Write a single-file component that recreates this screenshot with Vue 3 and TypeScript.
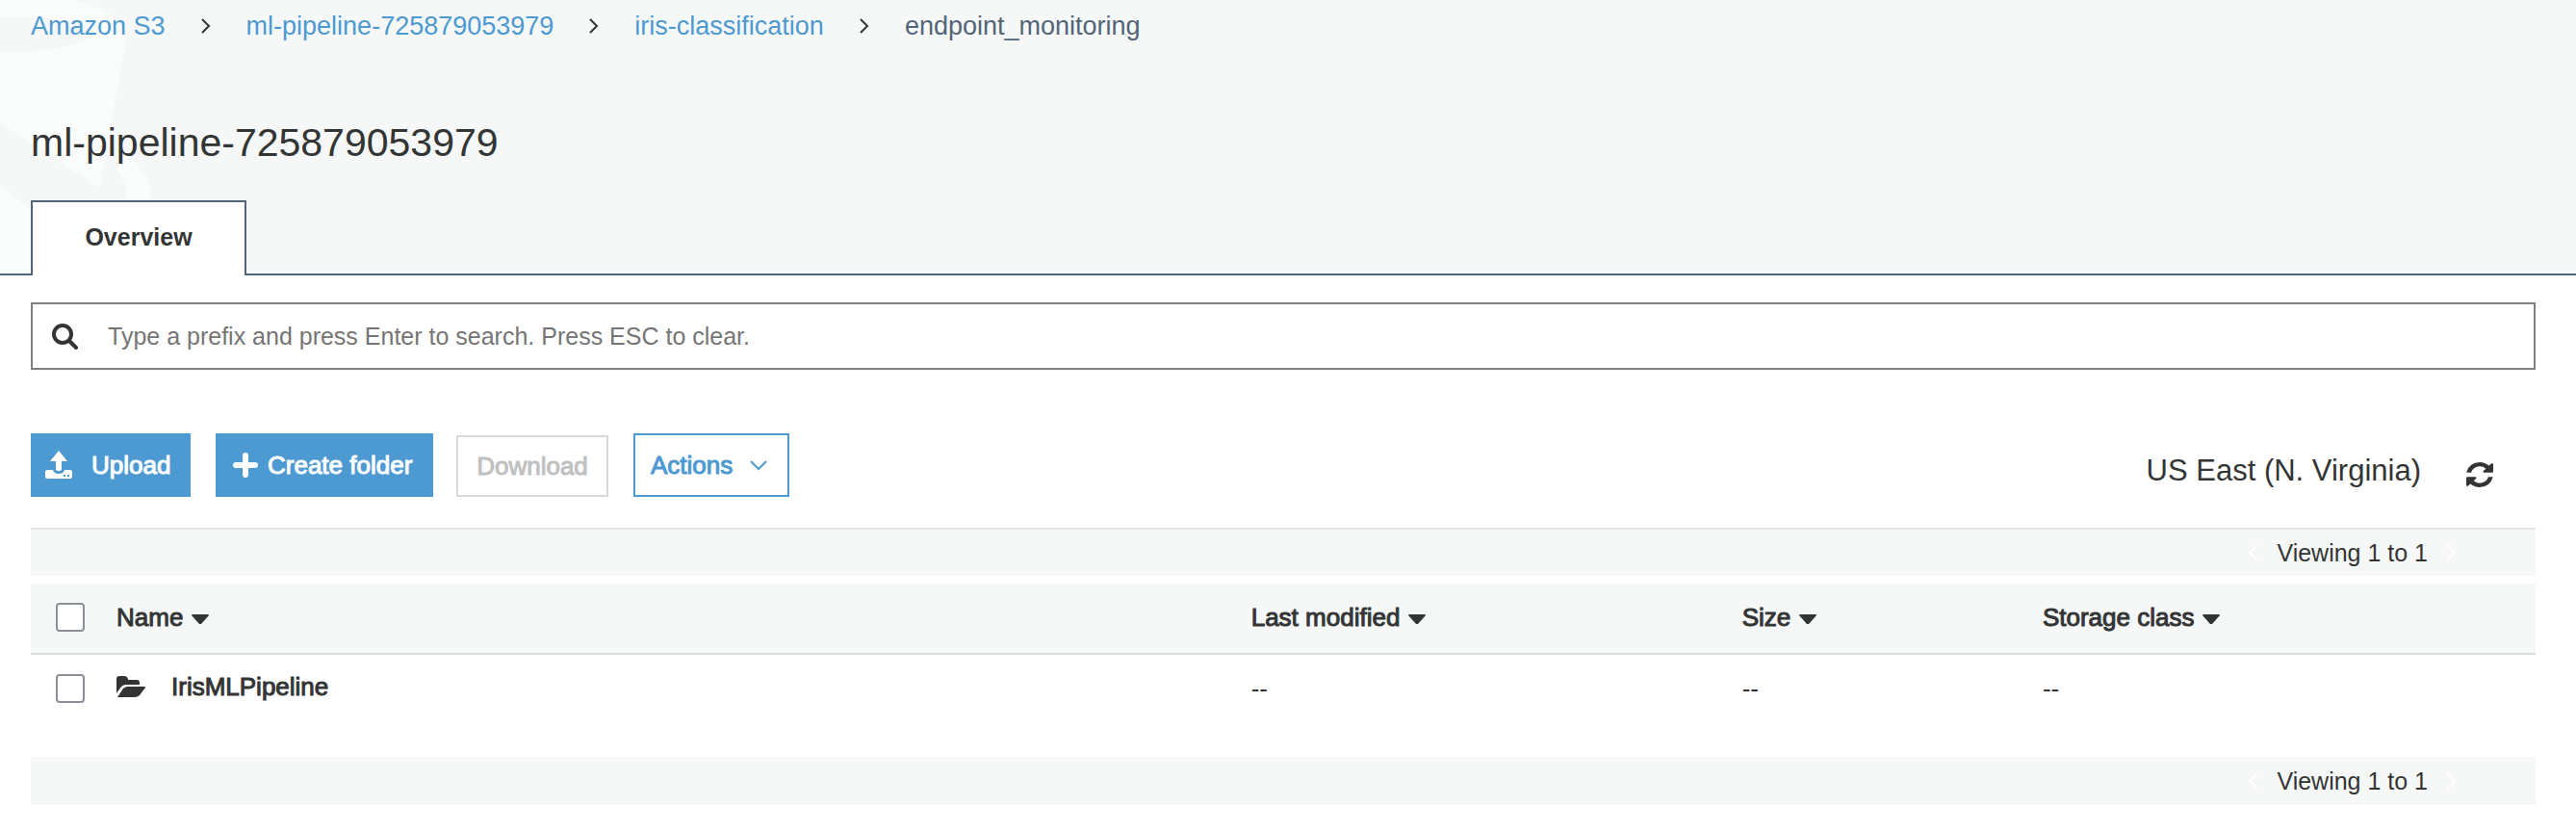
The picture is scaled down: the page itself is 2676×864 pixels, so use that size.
<script setup lang="ts">
import { ref } from 'vue'

interface Crumb {
  label: string
  href?: string
}

interface Column {
  key: 'modified' | 'size' | 'storage'
  label: string
}

interface Entry {
  name: string
  modified: string
  size: string
  storage: string
}

const crumbs: Crumb[] = [
  { label: 'Amazon S3', href: '#s3' },
  { label: 'ml-pipeline-725879053979', href: '#bucket' },
  { label: 'iris-classification', href: '#iris-classification' },
  { label: 'endpoint_monitoring' },
]

const columns: Column[] = [
  { key: 'modified', label: 'Last modified' },
  { key: 'size', label: 'Size' },
  { key: 'storage', label: 'Storage class' },
]

const entries: Entry[] = [
  { name: 'IrisMLPipeline', modified: '--', size: '--', storage: '--' },
]

const prefix = ref('')
const selected = ref<string[]>([])

function toggleAll(event: Event) {
  const checked = (event.target as HTMLInputElement).checked
  selected.value = checked ? entries.map((entry) => entry.name) : []
}
</script>

<template>
  <div class="page">
    <header class="masthead">
      <svg class="bucket" width="180" height="284" viewBox="0 0 180 284" aria-hidden="true">
        <path class="bucket-light" d="M0 0H75C108 8 132 20 130 45L104 195L0 128Z" />
        <path class="bucket-light" d="M0 192L40 224V284H0Z" />
        <path class="bucket-light" d="M128 158C148 170 158 190 157 215H124C135 205 134 192 122 178Z" />
        <path class="bucket-dark" d="M0 17C50 16 98 24 98 34C94 46 50 55 0 54Z" />
      </svg>

      <nav class="crumbs" aria-label="Breadcrumb">
        <template v-for="(crumb, index) in crumbs" :key="crumb.label">
          <svg v-if="index > 0" class="crumb-arrow" width="12" height="18" viewBox="0 0 12 18" aria-hidden="true">
            <path d="M2 2L9 9L2 16" />
          </svg>
          <a v-if="crumb.href" :href="crumb.href">{{ crumb.label }}</a>
          <span v-else aria-current="page">{{ crumb.label }}</span>
        </template>
      </nav>

      <h1>ml-pipeline-725879053979</h1>

      <div class="tabs" role="tablist">
        <button class="tab" type="button" role="tab" aria-selected="true">Overview</button>
      </div>
    </header>

    <main>
      <label class="search">
        <svg width="28" height="28" viewBox="0 0 28 28" aria-hidden="true">
          <circle cx="11" cy="12" r="9" fill="none" stroke="currentColor" stroke-width="4" />
          <path d="M18 19L25 26" fill="none" stroke="currentColor" stroke-width="4" stroke-linecap="round" />
        </svg>
        <input
          v-model="prefix"
          type="text"
          aria-label="Search by prefix"
          placeholder="Type a prefix and press Enter to search. Press ESC to clear."
          @keydown.esc="prefix = ''"
        />
      </label>

      <div class="toolbar">
        <button class="button primary upload" type="button">
          <svg width="28" height="30" viewBox="0 0 28 30" aria-hidden="true">
            <path d="M14 0L23 11H17V19Q17 21 14 21Q11 21 11 19V11H5Z" fill="currentColor" />
            <path d="M2 20H8Q9 24 14 24Q19 24 20 20H26Q28 20 28 22V27Q28 29 26 29H2Q0 29 0 27V22Q0 20 2 20ZM19 25V27H21V25ZM23 25V27H25V25Z" fill="currentColor" fill-rule="evenodd" />
          </svg>
          Upload
        </button>
        <button class="button primary create" type="button">
          <svg width="26" height="26" viewBox="0 0 26 26" aria-hidden="true">
            <path d="M13 3V23M3 13H23" fill="none" stroke="currentColor" stroke-width="6" stroke-linecap="round" />
          </svg>
          Create folder
        </button>
        <button class="button download" type="button" disabled>Download</button>
        <button class="button actions" type="button" aria-haspopup="menu">
          Actions
          <svg width="18" height="12" viewBox="0 0 18 12" aria-hidden="true">
            <path d="M1 2L9 10L17 2" fill="none" stroke="currentColor" stroke-width="2" />
          </svg>
        </button>
        <span class="region">US East (N. Virginia)</span>
        <button class="refresh" type="button" aria-label="Refresh">
          <svg width="28" height="26" viewBox="0 0 1536 1536" preserveAspectRatio="none" aria-hidden="true">
            <path fill="currentColor" d="M1511 928q0 5-1 7-64 268-268 434.500T764 1536q-146 0-282.500-55T238 1324l-129 129q-19 19-45 19t-45-19-19-45V960q0-26 19-45t45-19h448q26 0 45 19t19 45-19 45l-137 137q71 66 161 102t187 36q134 0 250-65t186-179q11-17 53-117 8-23 30-23h192q13 0 22.500 9.500t9.500 22.500zm25-800v448q0 26-19 45t-45 19h-448q-26 0-45-19t-19-45 19-45l138-138Q969 256 768 256q-134 0-250 65T332 500q-11 17-53 117-8 23-30 23H50q-13 0-22.500-9.500T18 608v-7q65-268 270-434.500T768 0q146 0 284 55.500T1297 212l130-129q19-19 45-19t45 19 19 45z" />
          </svg>
        </button>
      </div>

      <div class="pager first">
        <button type="button" aria-label="Previous page" disabled>
          <svg width="12" height="18" viewBox="0 0 12 18" aria-hidden="true"><path d="M10 1L2 9L10 17" /></svg>
        </button>
        <span>Viewing 1 to 1</span>
        <button type="button" aria-label="Next page" disabled>
          <svg width="12" height="18" viewBox="0 0 12 18" aria-hidden="true"><path d="M2 1L10 9L2 17" /></svg>
        </button>
      </div>

      <table>
        <colgroup>
          <col class="col-check" />
          <col class="col-name" />
          <col class="col-modified" />
          <col class="col-size" />
          <col />
        </colgroup>
        <thead>
          <tr>
            <th class="check">
              <input
                type="checkbox"
                aria-label="Select all"
                :checked="selected.length === entries.length"
                @change="toggleAll"
              />
            </th>
            <th>
              <button class="sort" type="button">
                Name
                <svg width="18" height="10" viewBox="0 0 18 10" aria-hidden="true"><path d="M1 0H17Q18 0 18 1L10 10H8L0 1Q0 0 1 0Z" fill="currentColor" /></svg>
              </button>
            </th>
            <th v-for="column in columns" :key="column.key">
              <button class="sort" type="button">
                {{ column.label }}
                <svg width="18" height="10" viewBox="0 0 18 10" aria-hidden="true"><path d="M1 0H17Q18 0 18 1L10 10H8L0 1Q0 0 1 0Z" fill="currentColor" /></svg>
              </button>
            </th>
          </tr>
        </thead>
        <tbody>
          <tr v-for="entry in entries" :key="entry.name">
            <td class="check">
              <input v-model="selected" type="checkbox" :value="entry.name" :aria-label="`Select ${entry.name}`" />
            </td>
            <td>
              <a class="entry" :href="`#${entry.name}`">
                <svg width="30" height="22" viewBox="0 0 30 22" aria-hidden="true">
                  <path d="M0 18V3Q0 0 3 0H8Q11 0 12 3V4H21Q24 4 24 7V9H10Q7 9 5 11Z" fill="currentColor" />
                  <path d="M1 22L7 13Q9 11 12 11H29Q30 11 30 12L24 20Q22 22 19 22Z" fill="currentColor" />
                </svg>
                {{ entry.name }}
              </a>
            </td>
            <td v-for="column in columns" :key="column.key">{{ entry[column.key] }}</td>
          </tr>
        </tbody>
      </table>

      <div class="pager">
        <button type="button" aria-label="Previous page" disabled>
          <svg width="12" height="18" viewBox="0 0 12 18" aria-hidden="true"><path d="M10 1L2 9L10 17" /></svg>
        </button>
        <span>Viewing 1 to 1</span>
        <button type="button" aria-label="Next page" disabled>
          <svg width="12" height="18" viewBox="0 0 12 18" aria-hidden="true"><path d="M2 1L10 9L2 17" /></svg>
        </button>
      </div>
    </main>
  </div>
</template>

<style>
body {
  margin: 0;
  background: #fff;
}
</style>

<style scoped>
.page {
  color: #333535;
  font-family: "Liberation Sans", Arial, sans-serif;
  font-size: 26px;
  line-height: 30px;
}

button,
input {
  margin: 0;
  font: inherit;
  color: inherit;
}

svg {
  display: block;
  flex: none;
}

.masthead {
  position: relative;
  background: #f6f8f8;
  box-shadow: inset 0 -2px #526577;
}

.bucket {
  position: absolute;
  top: 0;
  left: 0;
}

.bucket-light {
  fill: #fbfdfd;
}

.bucket-dark {
  fill: #f6f8f8;
}

.crumbs {
  position: relative;
  display: flex;
  align-items: center;
  gap: 36px;
  height: 30px;
  padding: 12px 32px 0;
  color: #526577;
  font-size: 27px;
}

.crumbs a {
  color: #4d99d1;
  text-decoration: none;
}

.crumb-arrow {
  fill: none;
  stroke: #333535;
  stroke-width: 2;
}

h1 {
  position: relative;
  margin: 0;
  padding: 82px 32px 36px;
  font-size: 41px;
  font-weight: 400;
  line-height: 48px;
}

.tabs {
  position: relative;
  display: flex;
  padding: 0 32px;
}

.tab {
  min-width: 224px;
  height: 78px;
  padding: 0 54px 4px;
  border: 2px solid #526577;
  border-bottom: 0;
  background: #fff;
  font-size: 25px;
  font-weight: 700;
}

main {
  padding: 28px 42px 24px 32px;
}

.search {
  display: flex;
  align-items: center;
  gap: 30px;
  height: 66px;
  padding: 0 20px;
  border: 2px solid #808080;
}

.search input {
  flex: 1;
  padding: 0;
  border: 0;
  outline: 0;
  background: none;
  font-size: 25px;
}

.search input::placeholder {
  color: #757575;
  opacity: 1;
}

.toolbar {
  display: flex;
  align-items: flex-end;
  margin-top: 66px;
}

.button {
  display: flex;
  align-items: center;
  height: 66px;
  box-sizing: border-box;
  border: 2px solid #4d99d1;
  background: #fff;
  color: #4d99d1;
  -webkit-text-stroke: 1px currentColor;
}

.primary {
  background: #4d99d1;
  color: #fff;
}

.upload {
  gap: 20px;
  min-width: 166px;
  margin-right: 26px;
  padding: 0 16px 0 13px;
}

.create {
  gap: 10px;
  min-width: 226px;
  margin-right: 24px;
  padding: 0 16px;
}

.download {
  justify-content: center;
  min-width: 158px;
  height: 64px;
  margin-right: 26px;
  padding: 0 16px;
  border-color: #d9d9d9;
  color: #bfc1c1;
}

.actions {
  gap: 18px;
  min-width: 162px;
  padding: 0 16px;
}

.region {
  margin-left: auto;
  padding-bottom: 9px;
  font-size: 31px;
  line-height: 36px;
}

.refresh {
  margin: 0 44px 10px 47px;
  padding: 0;
  border: 0;
  background: none;
}

.pager {
  display: flex;
  align-items: center;
  justify-content: flex-end;
  gap: 18px;
  height: 50px;
  padding-right: 82px;
  background: #f6f8f8;
  font-size: 25px;
}

.pager.first {
  height: 48px;
  margin: 32px 0 8px;
  border-top: 2px solid #e2e4e4;
}

.pager button {
  padding: 0;
  border: 0;
  background: none;
}

.pager path {
  fill: none;
  stroke: #fff;
  stroke-width: 2;
}

table {
  width: 100%;
  table-layout: fixed;
  border-collapse: separate;
  border-spacing: 0;
}

.col-check {
  width: 89px;
}

.col-name {
  width: 45.3%;
}

.col-modified {
  width: 19.6%;
}

.col-size {
  width: 12%;
}

th,
td {
  padding: 0;
  text-align: left;
  font-weight: 400;
}

th {
  height: 70px;
  padding-bottom: 2px;
  border-bottom: 2px solid #d9dcdc;
  background: #f6f8f8;
  -webkit-text-stroke: 1px currentColor;
}

td {
  height: 70px;
  padding-bottom: 36px;
}

.check {
  padding-left: 26px;
}

.check input {
  display: block;
  width: 30px;
  height: 30px;
  box-sizing: border-box;
  border: 2px solid #8b9096;
  border-radius: 4px;
  background: #fff;
  appearance: none;
}

.check input:checked {
  background: #4d99d1;
}

.sort {
  display: flex;
  align-items: center;
  gap: 9px;
  padding: 0;
  border: 0;
  background: none;
}

.sort svg {
  margin-top: 4px;
}

.entry {
  display: flex;
  align-items: center;
  gap: 27px;
  padding-bottom: 4px;
  color: inherit;
  text-decoration: none;
  -webkit-text-stroke: 1px currentColor;
}
</style>
